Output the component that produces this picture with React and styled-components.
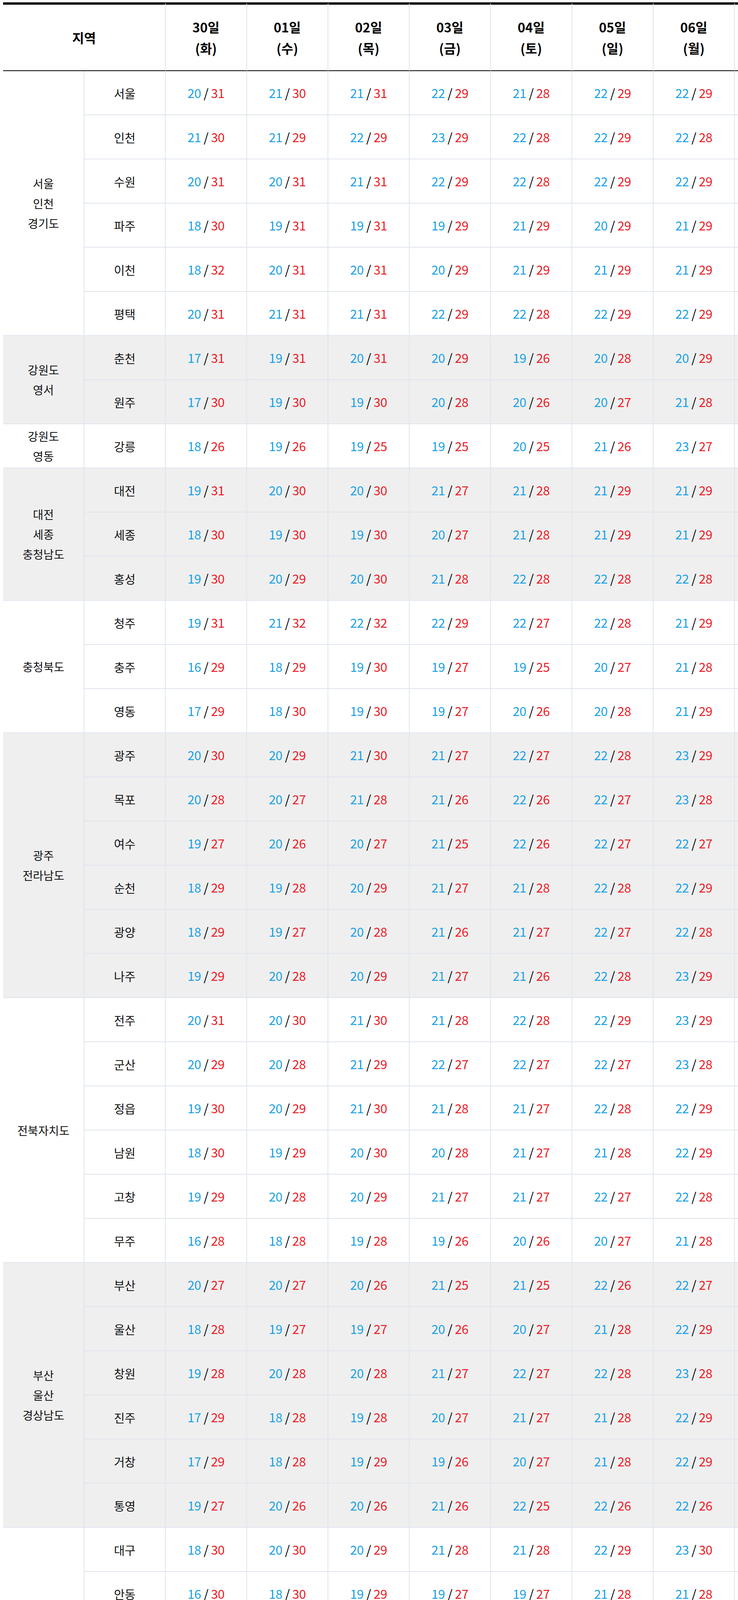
import { Fragment } from "react";
import styled, { createGlobalStyle } from "styled-components";

const GlobalStyle = createGlobalStyle`
  html, body {
    margin: 0;
    padding: 0;
    background: #fff;
    font-family: "Noto Sans CJK KR", "Noto Sans", sans-serif;
    color: #111;
  }
`;

const Page = styled.div`
  padding: 6px 0 0 8px;
`;

const Grid = styled.div`
  display: grid;
  width: 1880px;
  grid-template-columns: repeat(9, 208px) 8px;
  grid-template-rows: 176px;
  grid-auto-rows: 113px;
`;

const HeadCell = styled.div`
  box-sizing: border-box;
  grid-column: ${(p) => (p.$span ? `span ${p.$span}` : "auto")};
  display: flex;
  flex-direction: column;
  align-items: center;
  justify-content: center;
  border-top: 6px solid #000;
  border-bottom: 2px solid #000;
  border-right: ${(p) => (p.$stub ? "none" : "2px solid #dfe4ee")};
  font-size: 33px;
  font-weight: 700;
  line-height: 54px;
  color: #000;
  text-align: center;
`;

const Cell = styled.div`
  box-sizing: border-box;
  display: flex;
  flex-direction: column;
  align-items: center;
  justify-content: center;
  border-right: 2px solid #dfe4ee;
  border-bottom: 2px solid #dfe4ee;
  background: ${(p) => (p.$shade ? "#efefef" : "#fff")};
  text-align: center;
  line-height: 1.2;
`;

const GroupCell = styled(Cell)`
  grid-row: span ${(p) => p.$rows};
  font-size: 29px;
  line-height: 51px;
  color: #111;
`;

const CityCell = styled(Cell)`
  font-size: 30px;
  color: #111;
`;

const TempCell = styled(Cell)`
  display: block;
  line-height: 111px;
  font-size: 32px;
  letter-spacing: -0.5px;
  white-space: nowrap;
`;

const StubCell = styled(Cell)`
  border-right: none;
`;

const Low = styled.span`
  color: #1aa1e6;
`;

const High = styled.span`
  color: #ee1c25;
`;

const Slash = styled.span`
  color: #000;
`;

const days = [
  ["30일", "화"],
  ["01일", "수"],
  ["02일", "목"],
  ["03일", "금"],
  ["04일", "토"],
  ["05일", "일"],
  ["06일", "월"],
];

const groups = [
  {
    name: ["서울", "인천", "경기도"],
    cities: [
      ["서울", "20/31 21/30 21/31 22/29 21/28 22/29 22/29"],
      ["인천", "21/30 21/29 22/29 23/29 22/28 22/29 22/28"],
      ["수원", "20/31 20/31 21/31 22/29 22/28 22/29 22/29"],
      ["파주", "18/30 19/31 19/31 19/29 21/29 20/29 21/29"],
      ["이천", "18/32 20/31 20/31 20/29 21/29 21/29 21/29"],
      ["평택", "20/31 21/31 21/31 22/29 22/28 22/29 22/29"],
    ],
  },
  {
    name: ["강원도", "영서"],
    cities: [
      ["춘천", "17/31 19/31 20/31 20/29 19/26 20/28 20/29"],
      ["원주", "17/30 19/30 19/30 20/28 20/26 20/27 21/28"],
    ],
  },
  {
    name: ["강원도", "영동"],
    cities: [["강릉", "18/26 19/26 19/25 19/25 20/25 21/26 23/27"]],
  },
  {
    name: ["대전", "세종", "충청남도"],
    cities: [
      ["대전", "19/31 20/30 20/30 21/27 21/28 21/29 21/29"],
      ["세종", "18/30 19/30 19/30 20/27 21/28 21/29 21/29"],
      ["홍성", "19/30 20/29 20/30 21/28 22/28 22/28 22/28"],
    ],
  },
  {
    name: ["충청북도"],
    cities: [
      ["청주", "19/31 21/32 22/32 22/29 22/27 22/28 21/29"],
      ["충주", "16/29 18/29 19/30 19/27 19/25 20/27 21/28"],
      ["영동", "17/29 18/30 19/30 19/27 20/26 20/28 21/29"],
    ],
  },
  {
    name: ["광주", "전라남도"],
    cities: [
      ["광주", "20/30 20/29 21/30 21/27 22/27 22/28 23/29"],
      ["목포", "20/28 20/27 21/28 21/26 22/26 22/27 23/28"],
      ["여수", "19/27 20/26 20/27 21/25 22/26 22/27 22/27"],
      ["순천", "18/29 19/28 20/29 21/27 21/28 22/28 22/29"],
      ["광양", "18/29 19/27 20/28 21/26 21/27 22/27 22/28"],
      ["나주", "19/29 20/28 20/29 21/27 21/26 22/28 23/29"],
    ],
  },
  {
    name: ["전북자치도"],
    cities: [
      ["전주", "20/31 20/30 21/30 21/28 22/28 22/29 23/29"],
      ["군산", "20/29 20/28 21/29 22/27 22/27 22/27 23/28"],
      ["정읍", "19/30 20/29 21/30 21/28 21/27 22/28 22/29"],
      ["남원", "18/30 19/29 20/30 20/28 21/27 21/28 22/29"],
      ["고창", "19/29 20/28 20/29 21/27 21/27 22/27 22/28"],
      ["무주", "16/28 18/28 19/28 19/26 20/26 20/27 21/28"],
    ],
  },
  {
    name: ["부산", "울산", "경상남도"],
    cities: [
      ["부산", "20/27 20/27 20/26 21/25 21/25 22/26 22/27"],
      ["울산", "18/28 19/27 19/27 20/26 20/27 21/28 22/29"],
      ["창원", "19/28 20/28 20/28 21/27 22/27 22/28 23/28"],
      ["진주", "17/29 18/28 19/28 20/27 21/27 21/28 22/29"],
      ["거창", "17/29 18/28 19/29 19/26 20/27 21/28 22/29"],
      ["통영", "19/27 20/26 20/26 21/26 22/25 22/26 22/26"],
    ],
  },
  {
    name: ["대구", "경상북도"],
    cities: [
      ["대구", "18/30 20/30 20/29 21/28 21/28 22/29 23/30"],
      ["안동", "16/30 18/30 19/29 19/27 19/27 21/28 21/28"],
      ["포항", "20/26 20/27 21/27 21/26 21/27 22/28 23/29"],
      ["경주", "17/28 18/28 19/28 19/27 20/27 21/29 22/30"],
      ["울진", "17/24 18/25 19/25 19/24 20/25 21/26 21/27"],
      ["울릉도", "19/24 19/24 20/24 20/23 20/23 21/24 21/24"],
    ],
  },
  {
    name: ["제주도"],
    cities: [
      ["제주", "20/26 21/26 22/26 22/27 23/28 24/28 24/28"],
      ["서귀포", "18/24 20/25 20/24 21/24 22/25 22/25 22/26"],
    ],
  },
];

const Temp = ({ value }) => {
  const [low, high] = value.split("/");
  return (
    <>
      <Low>{low}</Low>
      <Slash> / </Slash>
      <High>{high}</High>
    </>
  );
};

const App = () => {
  return (
    <>
      <GlobalStyle />
      <Page>
        <Grid>
          <HeadCell $span={2}>지역</HeadCell>
          {days.map(([d, w]) => (
            <HeadCell key={d}>
              <span>{d}</span>
              <span>({w})</span>
            </HeadCell>
          ))}
          <HeadCell $stub />
          {groups.map((g, gi) => {
            const shade = gi % 2 === 1;
            return g.cities.map(([city, temps], ci) => (
              <Fragment key={`${gi}-${ci}`}>
                {ci === 0 && (
                  <GroupCell $shade={shade} $rows={g.cities.length}>
                    {g.name.map((n, i) => (
                      <span key={i}>{n}</span>
                    ))}
                  </GroupCell>
                )}
                <CityCell $shade={shade}>{city}</CityCell>
                {temps.split(" ").map((v, di) => (
                  <TempCell key={di} $shade={shade}>
                    <Temp value={v} />
                  </TempCell>
                ))}
                <StubCell $shade={shade} />
              </Fragment>
            ));
          })}
        </Grid>
      </Page>
    </>
  );
};

export default App;
